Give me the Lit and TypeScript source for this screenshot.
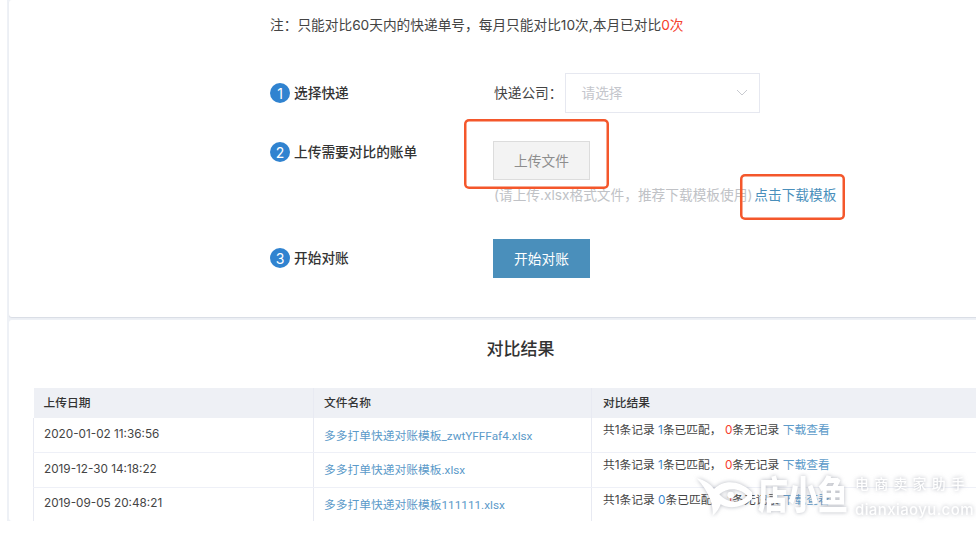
import { LitElement, html, css, svg } from "lit";
import { customElement } from "lit/decorators.js";

const rows = [
  { date: "2020-01-02 11:36:56", file: "多多打单快递对账模板_zwtYFFFaf4.xlsx", matched: "1", missing: "0" },
  { date: "2019-12-30 14:18:22", file: "多多打单快递对账模板.xlsx", matched: "1", missing: "0" },
  { date: "2019-09-05 20:48:21", file: "多多打单快递对账模板111111.xlsx", matched: "0", missing: "1" },
];

@customElement("app-root")
export class AppRoot extends LitElement {
  static styles = css`
    :host {
      display: block;
      width: 976px;
      height: 533px;
      overflow: hidden;
      background: #fff;
      font-family: Inter, "Noto Sans CJK SC", sans-serif;
      color: #333;
      font-size: 13.7px;
    }
    .shot {
      position: relative;
      width: 976px;
      height: 533px;
      overflow: hidden;
      filter: blur(0.4px);
    }
    .page {
      height: 521px;
      width: 1100px;
      margin-left: 7px;
      background: #eef1f6;
      padding-left: 2px;
      box-sizing: border-box;
      display: flex;
      flex-direction: column;
      gap: 3px;
      overflow: hidden;
    }
    .card {
      width: 1024px;
      background: #fff;
      border-radius: 3px;
      box-sizing: border-box;
    }
    .top {
      height: 317px;
      padding: 15px 0 0 261px;
      flex: none;
      box-shadow: 0 1px 1px rgba(120, 130, 150, 0.18);
    }
    .note { line-height: 20px; height: 20px; color: #444; white-space: nowrap; }
    .red { color: #f5402c; }
    .steps {
      margin-top: 38px;
      display: grid;
      grid-template-columns: 224px 1fr;
      grid-template-rows: 40px 126px 40px;
    }
    .step {
      display: flex;
      align-items: center;
      gap: 4px;
      height: 20px;
      font-weight: 500;
      color: #333;
      white-space: nowrap;
    }
    .lab { padding-bottom: 2px; }
    .s1 { margin-top: 10px; }
    .s2 { margin-top: 29px; }
    .s3 { margin-top: 9px; }
    .num {
      width: 20px;
      height: 20px;
      border-radius: 50%;
      background: #3083d0;
      color: #fff;
      font-size: 14px;
      font-weight: 400;
      display: flex;
      align-items: center;
      justify-content: center;
    }
    .company { display: flex; align-items: center; gap: 3px; height: 40px; white-space: nowrap; color: #444; }
    .select {
      width: 195px;
      height: 40px;
      box-sizing: border-box;
      border: 1px solid #e6e8f0;
      display: flex;
      align-items: center;
      justify-content: space-between;
      padding: 0 11px 2px 15px;
      color: #c4c6cc;
    }
    .upload { padding-top: 28px; }
    .btn {
      width: 97px;
      height: 39px;
      box-sizing: border-box;
      margin-left: -1px;
      padding-bottom: 2px;
      display: flex;
      align-items: center;
      justify-content: center;
      white-space: nowrap;
    }
    .btn.gray { background: #f3f3f3; border: 1px solid #dcdcdc; color: #8d8d8d; }
    .btn.blue { background: #4a8fbb; color: #fff; }
    .hint { margin-top: 5px; line-height: 20px; color: #c0c2c6; white-space: nowrap; }
    .link { color: #4a8fbb; }
    .hint .link { margin-left: -2px; }
    .results { flex: none; height: 201px; overflow: hidden; padding: 0 0 0 24px; }
    h2 {
      margin: 0;
      font-size: 17px;
      line-height: 24px;
      font-weight: 500;
      color: #333;
      text-align: center;
      padding: 17px 25px 27px 0;
    }
    table { border-collapse: collapse; table-layout: fixed; width: 976px; font-size: 11.75px; }
    th {
      box-sizing: border-box;
      height: 30px;
      padding: 0 11px 3px;
      background: #eef0f5;
      text-align: left;
      font-weight: 500;
      border-right: 1px solid #e8eaf2;
    }
    td {
      box-sizing: border-box;
      height: 34.5px;
      padding: 0 11px 2px;
      border-right: 1px solid #e8eaf2;
      border-left: 1px solid #e8eaf2;
      border-bottom: 1px solid #eef0f7;
      color: #444;
      white-space: nowrap;
    }
    th:nth-child(-n + 2), td:nth-child(-n + 2) { padding-left: 10px; }
    td.res { vertical-align: top; padding-top: 4px; line-height: 16px; }
    td .link { color: #5b9ac9; }
    td .file { font-family: Roboto, "Noto Sans CJK SC", sans-serif; }
    .c1 { width: 280px; }
    .c2 { width: 278px; }
    .blue-t { color: #3a86cc; }
    .frame {
      position: absolute;
      border-radius: 5px;
      box-shadow: inset 0 0 0 2.5px #f4572b;
    }
    .f1 { left: 464px; top: 119px; width: 145px; height: 70px; }
    .f2 { left: 740px; top: 174px; width: 105px; height: 46px; }
    .mark {
      position: absolute;
      left: 690px;
      top: 475px;
      display: flex;
      align-items: flex-start;
      color: #fff;
      filter: drop-shadow(0 0 2px rgba(120, 125, 140, 0.55));
      pointer-events: none;
    }
    .mark svg { display: block; flex: none; }
    .brand {
      flex: none;
      width: 90px;
      margin-left: 6px;
      font-size: 30px;
      line-height: 40px;
      font-weight: 900;
      white-space: nowrap;
      transform: scaleY(1.3);
    }
    .sub { margin-left: 7px; display: flex; flex-direction: column; gap: 8px; }
    .sub1 { font-size: 14px; line-height: 18px; letter-spacing: 5.2px; font-weight: 500; white-space: nowrap; }
    .sub2 { font-size: 15px; line-height: 17px; letter-spacing: 0.4px; font-weight: 500; white-space: nowrap; }
  `;

  render() {
    return html`
      <div class="shot">
        <div class="page">
          <section class="card top">
            <div class="note">注：只能对比60天内的快递单号，每月只能对比10次,本月已对比<span class="red">0次</span></div>
            <div class="steps">
              <div class="step s1"><span class="num">1</span><span class="lab">选择快递</span></div>
              <div class="company">
                <span class="lab">快递公司：</span>
                <div class="select">
                  <span>请选择</span>
                  <svg width="12" height="7" viewBox="0 0 12 7"><path d="M1 1l5 5 5-5" fill="none" stroke="#c8cad0" stroke-width="1"/></svg>
                </div>
              </div>
              <div class="step s2"><span class="num">2</span><span class="lab">上传需要对比的账单</span></div>
              <div class="upload">
                <div class="btn gray">上传文件</div>
                <div class="hint">(请上传.xlsx格式文件，推荐下载模板使用) <span class="link">点击下载模板</span></div>
              </div>
              <div class="step s3"><span class="num">3</span><span class="lab">开始对账</span></div>
              <div><div class="btn blue">开始对账</div></div>
            </div>
          </section>
          <section class="card results">
            <h2>对比结果</h2>
            <table>
              <thead>
                <tr><th class="c1">上传日期</th><th class="c2">文件名称</th><th>对比结果</th></tr>
              </thead>
              <tbody>
                ${rows.map(
                  (r) => html`<tr>
                    <td>${r.date}</td>
                    <td><span class="link file">${r.file}</span></td>
                    <td class="res">共1条记录 <span class="blue-t">${r.matched}</span>条已匹配， <span class="red">${r.missing}</span>条无记录 <span class="link">下载查看</span></td>
                  </tr>`
                )}
              </tbody>
            </table>
          </section>
        </div>
        <div class="frame f1"></div>
        <div class="frame f2"></div>
        <div class="mark">
          ${svg`<svg width="62" height="44" viewBox="0 30 186 132"><path fill="currentColor" fill-rule="evenodd" d="M20 40C45 45 62 58 72 72C100 45 150 40 196 92C165 128 120 135 92 118C88 130 80 142 68 152C70 125 62 85 20 40ZM88 88C115 65 150 70 172 92C150 115 115 118 88 88Z"/><circle cx="122" cy="90" r="10" fill="currentColor"/></svg>`}
          <span class="brand">店小鱼</span>
          <div class="sub">
            <span class="sub1">电商卖家助手</span>
            <span class="sub2">dianxiaoyu.com</span>
          </div>
        </div>
      </div>
    `;
  }
}
